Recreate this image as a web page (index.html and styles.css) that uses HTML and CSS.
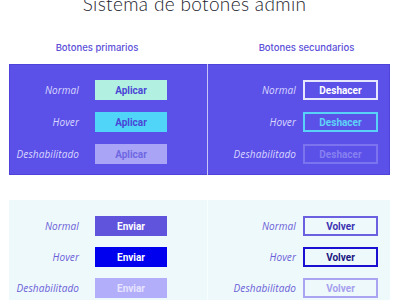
FILE: index.html
```html
<!DOCTYPE html>
<html lang="es">
<head>
    <meta charset="UTF-8">
    <meta name="viewport" content="width=device-width, initial-scale=1.0">
    <title>Sistema de botones admin</title>
    <link rel="stylesheet" href="styles.css">
</head>
<body>
    <div class="page">
        <h1 class="title">Sistema de botones admin</h1>

        <div class="headings">
            <h2 class="heading heading-primary">Botones primarios</h2>
            <h2 class="heading heading-secondary">Botones secundarios</h2>
        </div>

        <!-- Tema oscuro -->
        <div class="board board-dark">
            <div class="group group-primary">
                <span class="state">Normal</span>
                <button class="btn apply">Aplicar</button>
                <span class="state">Hover</span>
                <button class="btn apply hover">Aplicar</button>
                <span class="state">Deshabilitado</span>
                <button class="btn apply" disabled>Aplicar</button>
            </div>
            <div class="group group-secondary">
                <span class="state">Normal</span>
                <button class="btn undo">Deshacer</button>
                <span class="state">Hover</span>
                <button class="btn undo hover">Deshacer</button>
                <span class="state">Deshabilitado</span>
                <button class="btn undo" disabled>Deshacer</button>
            </div>
        </div>

        <!-- Tema claro -->
        <div class="board board-light">
            <div class="group group-primary">
                <span class="state">Normal</span>
                <button class="btn send">Enviar</button>
                <span class="state">Hover</span>
                <button class="btn send hover">Enviar</button>
                <span class="state">Deshabilitado</span>
                <button class="btn send" disabled>Enviar</button>
            </div>
            <div class="group group-secondary">
                <span class="state">Normal</span>
                <button class="btn back">Volver</button>
                <span class="state">Hover</span>
                <button class="btn back hover">Volver</button>
                <span class="state">Deshabilitado</span>
                <button class="btn back" disabled>Volver</button>
            </div>
        </div>
    </div>
</body>
</html>
```

FILE: styles.css
```css
body {
    margin: 0;
    padding: 0;
    background: #FFFFFF;
    font-family: 'Inter', sans-serif;
    overflow: hidden;
}

.page {
    padding: 0 10px 0 9px;
}

.title {
    margin: -6px 0 0;
    padding-right: 10px;
    font-family: 'Lato', sans-serif;
    font-size: 19px;
    font-weight: 300;
    line-height: 20px;
    letter-spacing: 0.35px;
    color: #22222E;
    text-align: center;
}

.headings {
    display: grid;
    grid-template-columns: 198px 183px;
    margin: 28px 0 10px;
}

.heading {
    margin: 0;
    font-size: 9.5px;
    font-weight: 500;
    line-height: 12px;
    color: #5B4FD8;
    text-align: center;
}

.heading-primary {
    padding-right: 22px;
}

.heading-secondary {
    padding-left: 16px;
}

.board {
    display: grid;
    grid-template-columns: 198px 183px;
}

.board-dark {
    background: #5B51E8;
    box-shadow: inset 0 0 0 1px #4E44DA;
}

.board-light {
    margin-top: 25px;
    background: #EEF9FB;
}

.group {
    display: grid;
    grid-auto-rows: 20px;
    align-items: center;
}

.group-primary {
    grid-template-columns: 70px 72px;
    column-gap: 16px;
}

.group-secondary {
    grid-template-columns: 88px 75px;
    column-gap: 7px;
    border-left: 1px solid #C8C4F8;
}

.board-dark .group {
    row-gap: 12px;
    padding: 16px 0 11px;
}

.board-light .group {
    row-gap: 11px;
    padding: 16px 0 30px;
}

.board-light .group-secondary {
    border-left-color: #F8FDFE;
}

.state {
    font-family: 'Open Sans', sans-serif;
    font-size: 10px;
    font-style: italic;
    letter-spacing: 0.1px;
    text-align: right;
    white-space: nowrap;
    color: #DAD7FF;
}

.board-light .state {
    color: #6A60D8;
}

.btn {
    height: 20px;
    padding: 0;
    border: 0;
    border-radius: 0;
    font-family: 'Roboto', sans-serif;
    font-size: 10px;
    font-weight: 700;
    cursor: pointer;
}

/* Aplicar */
.apply {
    background: #B2F1E1;
    color: #4B45D6;
}

.apply.hover {
    background: #50D5F8;
}

.apply:disabled {
    background: #A9A4F6;
    color: #6F68E2;
}

/* Deshacer */
.undo {
    background: transparent;
    border: 2px solid #E6E6FF;
    color: #FFFFFF;
}

.undo.hover {
    border-color: #58D2F6;
    color: #5FD3F8;
}

.undo:disabled {
    border-color: #7C73EF;
    color: #8780F1;
}

/* Enviar */
.send {
    background: #6053DC;
    color: #FFFFFF;
}

.send.hover {
    background: #0000EE;
}

.send:disabled {
    background: #B3AEF9;
    color: #E6E4FF;
}

/* Volver */
.back {
    background: transparent;
    border: 2px solid #6A60E0;
    color: #3C33B2;
}

.back.hover {
    border-color: #1A10D2;
    color: #1A1680;
}

.back:disabled {
    border-color: #AAA4F2;
    color: #A6A0EE;
}
```
